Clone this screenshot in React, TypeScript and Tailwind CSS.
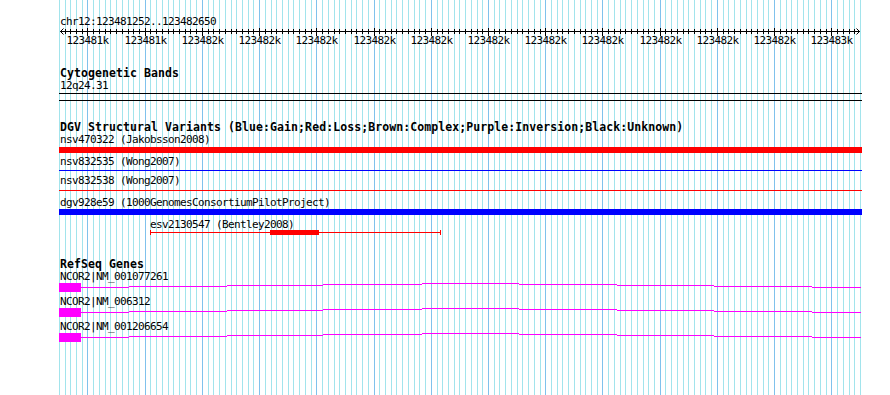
import type { ReactNode } from 'react'
import clsx from 'clsx'

const START = 123481252
const END = 123482650
const X0 = 60
const WIDTH = 800

const xOf = (bp: number) => X0 + ((bp - START) * WIDTH) / (END - START)

// grid + ruler ticks every 10bp, major every 100bp
const TICKS: { x: number; major: boolean }[] = []
for (let bp = 123481250; bp <= END; bp += 10) {
  TICKS.push({ x: Math.round(xOf(bp)) + 0.5, major: bp % 100 === 0 })
}

const MAJOR_LABELS = [
  '123481k', '123481k', '123482k', '123482k', '123482k', '123482k', '123482k',
  '123482k', '123482k', '123482k', '123482k', '123482k', '123482k', '123483k',
]

// intron segments of the RefSeq glyph: [from, to, offset from top of exon box]
const INTRONS: [number, number, number][] = [
  [81, 129, 4],
  [129, 227, 3],
  [227, 323, 2],
  [323, 422, 1],
  [422, 519, 0],
  [519, 617, 1],
  [617, 714, 2],
  [714, 812, 3],
  [812, 861, 4],
]

function Grid() {
  return (
    <svg className="absolute inset-0" width={890} height={395}>
      {TICKS.map((t, i) => (
        <line
          key={i}
          x1={t.x}
          x2={t.x}
          y1={0}
          y2={395}
          stroke={t.major ? '#80c2ec' : '#a2e4ec'}
          strokeWidth={1}
        />
      ))}
    </svg>
  )
}

function Ruler() {
  return (
    <svg width={890} height={20} className="block">
      <line x1={60} x2={860} y1={4.5} y2={4.5} stroke="#000" />
      {TICKS.filter((t) => t.x > 61 && t.x < 859).map((t, i) => (
        <line key={i} x1={t.x} x2={t.x} y1={t.major ? 1 : 2} y2={t.major ? 9 : 7} stroke="#000" />
      ))}
      <path d="M63.5 1.5 L60.5 4.5 L63.5 7.5" fill="none" stroke="#000" />
      <path d="M856.5 1.5 L859.5 4.5 L856.5 7.5" fill="none" stroke="#000" />
      {TICKS.filter((t) => t.major).map((t, i) => (
        <text
          key={i}
          x={t.x}
          y={17}
          textAnchor="middle"
          fontSize={11}
          letterSpacing={-0.62}
          fontFamily="DejaVu Sans Mono, monospace"
          fill="#000"
        >
          {MAJOR_LABELS[i]}
        </text>
      ))}
    </svg>
  )
}

function Title({ children, className }: { children: ReactNode; className?: string }) {
  return (
    <div className={clsx('h-[11px] whitespace-nowrap pl-[60px] text-[11.5px] font-bold leading-[11px] tracking-[0.08px]', className)}>
      {children}
    </div>
  )
}

function Label({ children, className }: { children: ReactNode; className?: string }) {
  return (
    <div className={clsx('h-[11px] whitespace-nowrap text-[11px] leading-[11px] tracking-[-0.62px]', className)}>
      {children}
    </div>
  )
}

function Gene({ name, className }: { name: string; className?: string }) {
  return (
    <div className={className}>
      <Label className="pl-[60px]">{name}</Label>
      <svg width={890} height={9} className="mt-[1px] block">
        <rect x={59} y={0} width={22} height={9} fill="#ff00ff" />
        {INTRONS.map(([a, b, dy], i) => (
          <rect key={i} x={a} y={dy} width={b - a} height={1} fill="#ff00ff" />
        ))}
      </svg>
    </div>
  )
}

export default function App() {
  return (
    <div className="relative h-[395px] w-[890px] overflow-hidden bg-white font-['DejaVu_Sans_Mono',monospace] text-black">
      <Grid />

      <div className="relative pt-[16px]">
        {/* ruler */}
        <Label className="pl-[60px]">chr12:123481252..123482650</Label>
        <Ruler />

        {/* cytoband */}
        <Title className="mt-[21px]">Cytogenetic Bands</Title>
        <Label className="mt-[1px] pl-[60px]">12q24.31</Label>
        <div className="mt-[2px] ml-[59px] h-[8px] w-[803px] border-y border-black" />

        {/* DGV */}
        <Title className="mt-[21px]">
          DGV Structural Variants (Blue:Gain;Red:Loss;Brown:Complex;Purple:Inversion;Black:Unknown)
        </Title>
        <Label className="mt-[1px] pl-[60px]">nsv470322 (Jakobsson2008)</Label>
        <div className="mt-[2px] ml-[59px] h-[6px] w-[803px] bg-[#ff0000]" />
        <Label className="mt-[3px] pl-[60px]">nsv832535 (Wong2007)</Label>
        <div className="mt-[3px] ml-[59px] h-[1px] w-[803px] bg-[#0000ff]" />
        <Label className="mt-[4px] pl-[60px]">nsv832538 (Wong2007)</Label>
        <div className="mt-[4px] ml-[59px] h-[1px] w-[803px] bg-[#ff0000]" />
        <Label className="mt-[6px] pl-[60px]">dgv928e59 (1000GenomesConsortiumPilotProject)</Label>
        <div className="mt-[1px] ml-[59px] h-[6px] w-[803px] bg-[#0000ff]" />
        <Label className="mt-[4px] pl-[150px]">esv2130547 (Bentley2008)</Label>
        <svg width={890} height={5} className="block">
          <rect x={150} y={2} width={291} height={1} fill="#ff0000" />
          <rect x={150} y={0} width={1} height={5} fill="#ff0000" />
          <rect x={440} y={0} width={1} height={5} fill="#ff0000" />
          <rect x={270} y={0} width={49} height={5} fill="#ff0000" />
        </svg>

        {/* RefSeq */}
        <Title className="mt-[24px]">RefSeq Genes</Title>
        <Gene name="NCOR2|NM_001077261" className="mt-[1px]" />
        <Gene name="NCOR2|NM_006312" className="mt-[4px]" />
        <Gene name="NCOR2|NM_001206654" className="mt-[4px]" />
      </div>
    </div>
  )
}
